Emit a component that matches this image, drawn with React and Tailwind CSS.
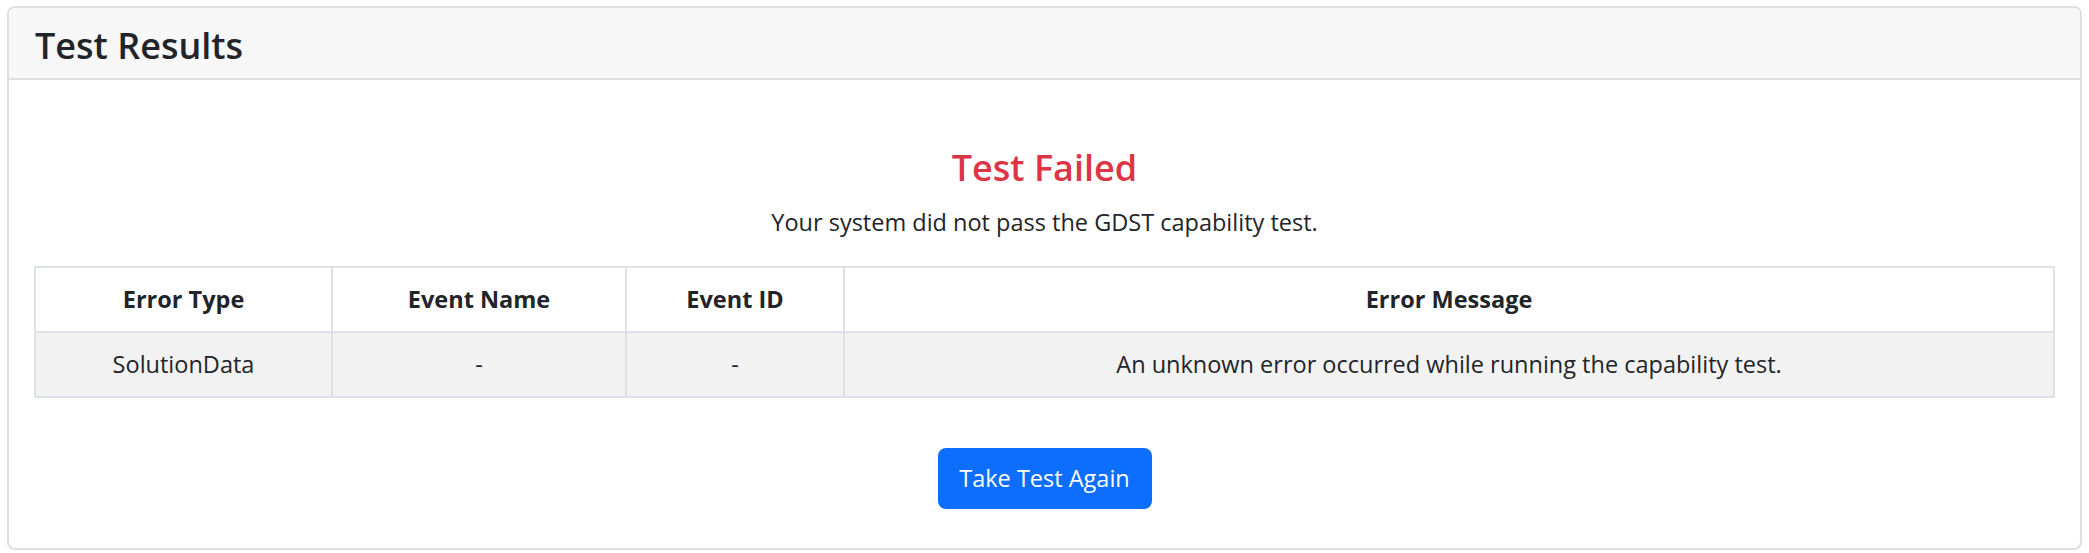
import React from 'react';

const errors = [
  {
    type: 'SolutionData',
    name: '-',
    id: '-',
    message: 'An unknown error occurred while running the capability test.',
  },
];

const font = { fontFamily: '"Open Sans", "Noto Sans", Arial, sans-serif' };

const App = () => {
  return (
    <div className="w-full h-[553px] bg-white pt-[6px] px-[7px] text-[#212529]" style={font}>
      <div className="h-[544px] border-2 border-[#dfdfdf] rounded-[8px] flex flex-col overflow-hidden">
        <div className="h-[72px] shrink-0 bg-[#f7f7f7] border-b-2 border-[#dfdfdf] px-[26px] flex items-center">
          <h3 className="text-[36px] font-semibold leading-none pt-[5px]">Test Results</h3>
        </div>

        <div className="px-[25px] pt-[65px] flex flex-col items-center">
          <h3 className="text-[36px] font-semibold leading-[46px] text-[#dc3545]">Test Failed</h3>
          <p className="mt-[15px] text-[23.5px] leading-[32px]">
            Your system did not pass the GDST capability test.
          </p>

          <table className="mt-[28px] w-full table-fixed border-collapse border-2 border-[#dee2e6] text-[23.5px]">
            <colgroup>
              <col className="w-[297px]" />
              <col className="w-[294px]" />
              <col className="w-[218px]" />
              <col />
            </colgroup>
            <thead>
              <tr className="h-[65px] bg-white">
                <th className="border-2 border-[#dee2e6] font-bold">Error Type</th>
                <th className="border-2 border-[#dee2e6] font-bold">Event Name</th>
                <th className="border-2 border-[#dee2e6] font-bold">Event ID</th>
                <th className="border-2 border-[#dee2e6] font-bold">Error Message</th>
              </tr>
            </thead>
            <tbody>
              {errors.map((e, i) => (
                <tr key={i} className="h-[65px] bg-[#f2f2f2]">
                  <td className="border-2 border-[#dee2e6] text-center">{e.type}</td>
                  <td className="border-2 border-[#dee2e6] text-center">{e.name}</td>
                  <td className="border-2 border-[#dee2e6] text-center">{e.id}</td>
                  <td className="border-2 border-[#dee2e6] text-center">{e.message}</td>
                </tr>
              ))}
            </tbody>
          </table>

          <button className="mt-[50px] w-[214px] h-[61px] rounded-[8px] bg-[#0d6efd] text-white text-[23.5px]">
            Take Test Again
          </button>
        </div>
      </div>
    </div>
  );
};

export default App;
